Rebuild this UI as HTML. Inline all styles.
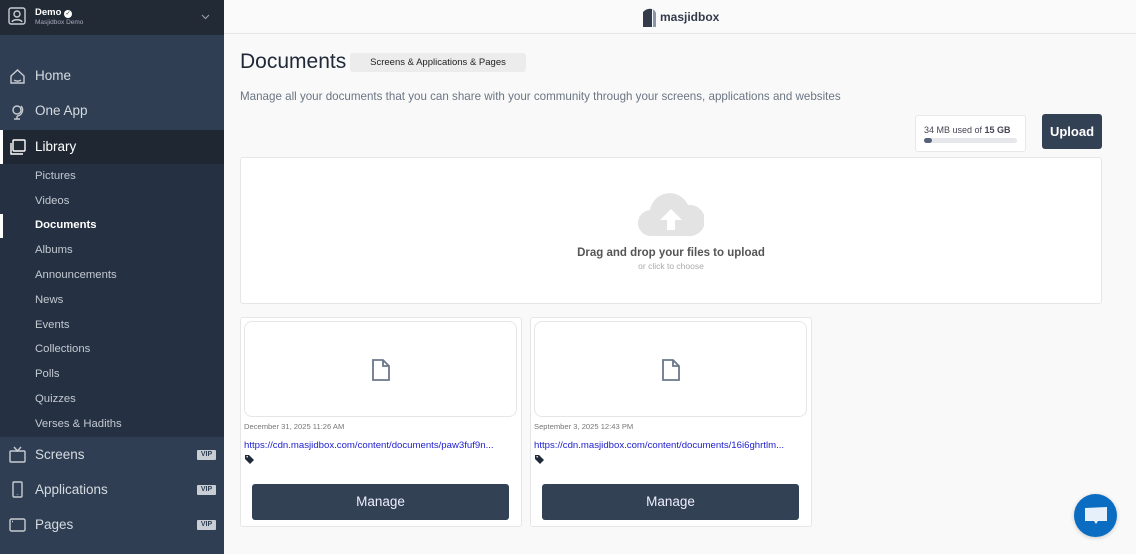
<!DOCTYPE html>
<html><head><meta charset="utf-8"><style>
*{box-sizing:border-box;margin:0;padding:0}
body{width:1136px;height:554px;overflow:hidden;font-family:"Liberation Sans","DejaVu Sans",sans-serif;background:#f9f9f9;position:relative}
.sb{position:absolute;left:0;top:0;width:224px;height:554px;background:#2f3e52}
.hd{position:absolute;left:0;top:0;width:224px;height:35px;background:#222a36}
.nav{position:absolute;left:35px;font-size:13.5px;color:#d6dbe1}
.sub{position:absolute;left:35px;font-size:11.3px;color:#c3c9d1}
.vip{position:absolute;left:197px;width:19px;height:10px;background:#c9ced5;color:#2f3e52;font-size:7px;font-weight:bold;text-align:center;line-height:10px;border-radius:1px}
.ic{position:absolute;left:9px}
.main{position:absolute;left:224px;top:0;width:912px;height:554px}
.card{position:absolute;top:317px;width:282px;height:210px;background:#fff;border:1px solid #e6e6e6;border-radius:3px}
.prev{position:absolute;left:3px;top:3px;width:273px;height:96px;border:1px solid #e6e6e6;border-radius:8px}
.date{position:absolute;left:3px;top:104px;font-size:7.6px;color:#777}
.url{position:absolute;left:3px;top:122px;font-size:9.6px;color:#2020d0;white-space:nowrap}
.btn{position:absolute;left:11px;top:166px;width:257px;height:36px;background:#334155;border-radius:3px;color:#eef;font-size:13.5px;text-align:center;line-height:36px}
</style></head><body>
<div class="sb">
 <div class="hd">
  <svg class="ic" style="left:8px;top:7px" width="18" height="18" viewBox="0 0 18 18" fill="none" stroke="#c8ccd2" stroke-width="1.4"><rect x="1" y="1" width="16" height="16" rx="2"/><circle cx="9" cy="7" r="3"/><path d="M4 15c1-3 9-3 10 0"/></svg>
  <div style="position:absolute;left:35px;top:7px;font-size:9.5px;font-weight:bold;color:#fff">Demo <span style="display:inline-block;width:8px;height:8px;border-radius:50%;background:#fff;color:#222;font-size:6px;line-height:8px;text-align:center">✓</span></div>
  <div style="position:absolute;left:35px;top:19px;font-size:6.5px;color:#aab">Masjidbox Demo</div>
  <svg style="position:absolute;left:201px;top:14px" width="9" height="6" viewBox="0 0 9 6" fill="none" stroke="#99a" stroke-width="1.2"><path d="M1 1l3.5 3.5L8 1"/></svg>
 </div>
 <svg class="ic" style="top:68px" width="17" height="17" viewBox="0 0 17 17" fill="none" stroke="#c8ccd2" stroke-width="1.4"><path d="M2 8l6.5-6 6.5 6v7H2z"/><path d="M5 12c2 1.5 5 1.5 7 0"/></svg>
 <div class="nav" style="top:68px">Home</div>
 <svg class="ic" style="top:103px" width="17" height="17" viewBox="0 0 17 17" fill="none" stroke="#c8ccd2" stroke-width="1.4"><circle cx="8" cy="7" r="4"/><path d="M12 3a6 6 0 0 1-4 10M8 13v3M5 16h6"/></svg>
 <div class="nav" style="top:103px">One App</div>
 <div style="position:absolute;left:0;top:130px;width:224px;height:34px;background:#1f2733"></div>
 <div style="position:absolute;left:0;top:130px;width:3px;height:34px;background:#fff"></div>
 <svg class="ic" style="top:139px" width="17" height="17" viewBox="0 0 17 17" fill="none" stroke="#fff" stroke-width="1.4"><rect x="4" y="1" width="12" height="11" rx="1"/><path d="M2 4v11h12"/></svg>
 <div class="nav" style="top:139px;color:#fff">Library</div>
 <div style="position:absolute;left:0;top:164px;width:224px;height:273px;background:#253142"></div>
 <div style="position:absolute;left:0;top:214px;width:3px;height:24px;background:#fff"></div>
 <div class="sub" style="top:170px">Pictures</div>
 <div class="sub" style="top:195px">Videos</div>
 <div class="sub" style="top:219px;color:#fff;font-weight:bold">Documents</div>
 <div class="sub" style="top:244px">Albums</div>
 <div class="sub" style="top:269px">Announcements</div>
 <div class="sub" style="top:294px">News</div>
 <div class="sub" style="top:319px">Events</div>
 <div class="sub" style="top:343px">Collections</div>
 <div class="sub" style="top:368px">Polls</div>
 <div class="sub" style="top:393px">Quizzes</div>
 <div class="sub" style="top:418px">Verses &amp; Hadiths</div>
 <svg class="ic" style="top:446px" width="17" height="17" viewBox="0 0 17 17" fill="none" stroke="#c8ccd2" stroke-width="1.4"><rect x="1" y="5" width="15" height="11" rx="1"/><path d="M5 1l3.5 4L12 1"/></svg>
 <div class="nav" style="top:447px">Screens</div><div class="vip" style="top:450px">VIP</div>
 <svg class="ic" style="top:481px" width="17" height="17" viewBox="0 0 17 17" fill="none" stroke="#c8ccd2" stroke-width="1.4"><rect x="4" y="1" width="9" height="15" rx="1"/><path d="M8.5 13v.5"/></svg>
 <div class="nav" style="top:482px">Applications</div><div class="vip" style="top:485px">VIP</div>
 <svg class="ic" style="top:517px" width="17" height="17" viewBox="0 0 17 17" fill="none" stroke="#c8ccd2" stroke-width="1.4"><rect x="1" y="2" width="15" height="12" rx="1.5"/><path d="M3 4.5h1"/></svg>
 <div class="nav" style="top:517px">Pages</div><div class="vip" style="top:520px">VIP</div>
</div>
<div class="main">
 <div style="position:absolute;left:0;top:0;width:912px;height:34px;border-bottom:1px solid #e6e6e6;background:#fafafa"></div>
 <svg style="position:absolute;left:419px;top:8px" width="14" height="19" viewBox="0 0 14 19"><path d="M0 4Q4 0 9 1V19H0z" fill="#333b4b"/><path d="M9 1q3 1 4 4V19H10V2z" fill="#8a95a8"/></svg>
 <div style="position:absolute;left:436px;top:10px;font-size:12px;font-weight:bold;color:#333b4b">masjidbox</div>
 <div style="position:absolute;left:16px;top:50px;font-size:21px;color:#1f2937">Documents</div>
 <div style="position:absolute;left:126px;top:53px;width:176px;height:19px;background:#ececec;border-radius:3px;font-size:9.5px;color:#222;text-align:center;line-height:19px">Screens &amp; Applications &amp; Pages</div>
 <div style="position:absolute;left:16px;top:90px;font-size:11.6px;color:#6b7583;white-space:nowrap">Manage all your documents that you can share with your community through your screens, applications and websites</div>
 <div style="position:absolute;left:691px;top:115px;width:111px;height:37px;background:#fff;border:1px solid #e8e8e8;border-radius:3px">
  <div style="position:absolute;left:8px;top:9px;font-size:9px;color:#445;white-space:nowrap">34 MB used of <b>15 GB</b></div>
  <div style="position:absolute;left:8px;top:22px;width:93px;height:5px;background:#e5e7eb;border-radius:3px"><div style="width:8px;height:5px;background:#55627a;border-radius:3px"></div></div>
 </div>
 <div style="position:absolute;left:818px;top:114px;width:60px;height:35px;background:#334155;border-radius:3px;color:#fff;font-size:13px;font-weight:bold;text-align:center;line-height:35px">Upload</div>
 <div style="position:absolute;left:16px;top:157px;width:862px;height:147px;background:#fff;border:1px solid #e6e6e6;border-radius:3px">
  <svg style="position:absolute;left:397px;top:34px" width="66" height="46" viewBox="0 0 66 46"><path d="M14 44a13 13 0 0 1-2-26 20 20 0 0 1 38-5 15 15 0 0 1 3 31z" fill="#e3e3e3"/><path d="M33 17l-11 11h7v10h8V28h7z" fill="#fff"/></svg>
  <div style="position:absolute;left:0;width:860px;top:89px;text-align:center;font-size:11.5px;font-weight:bold;color:#555">Drag and drop your files to upload</div>
  <div style="position:absolute;left:0;width:860px;top:103px;text-align:center;font-size:8.5px;color:#aaa">or click to choose</div>
 </div>
 <div class="card" style="left:16px">
  <div class="prev"><svg style="position:absolute;left:126px;top:36px" width="20" height="24" viewBox="0 0 20 24" fill="none" stroke="#6b778a" stroke-width="1.8"><path d="M2 2h10l6 6v14H2z M12 2v6h6"/></svg></div>
  <div class="date">December 31, 2025 11:26 AM</div>
  <div class="url">https://cdn.masjidbox.com/content/documents/paw3fuf9n...</div>
  <svg style="position:absolute;left:4px;top:136px" width="10" height="10" viewBox="0 0 10 10"><path d="M0 1v4l5 5 4-4-5-5H0z" fill="#1f2937"/><circle cx="2.2" cy="2.8" r=".8" fill="#fff"/></svg>
  <div class="btn">Manage</div>
 </div>
 <div class="card" style="left:306px">
  <div class="prev"><svg style="position:absolute;left:126px;top:36px" width="20" height="24" viewBox="0 0 20 24" fill="none" stroke="#6b778a" stroke-width="1.8"><path d="M2 2h10l6 6v14H2z M12 2v6h6"/></svg></div>
  <div class="date">September 3, 2025 12:43 PM</div>
  <div class="url">https://cdn.masjidbox.com/content/documents/16i6ghrtlm...</div>
  <svg style="position:absolute;left:4px;top:136px" width="10" height="10" viewBox="0 0 10 10"><path d="M0 1v4l5 5 4-4-5-5H0z" fill="#1f2937"/><circle cx="2.2" cy="2.8" r=".8" fill="#fff"/></svg>
  <div class="btn">Manage</div>
 </div>
 <div style="position:absolute;left:850px;top:494px;width:43px;height:43px;border-radius:50%;background:#0a6dc2;box-shadow:0 1px 4px rgba(0,0,0,.2)">
  <svg style="position:absolute;left:10px;top:11px" width="24" height="22" viewBox="0 0 24 22"><path d="M1 3l22-1v14H14l-2 3-2-3H1z" fill="#e6f0fa"/></svg>
 </div>
</div>
</body></html>
